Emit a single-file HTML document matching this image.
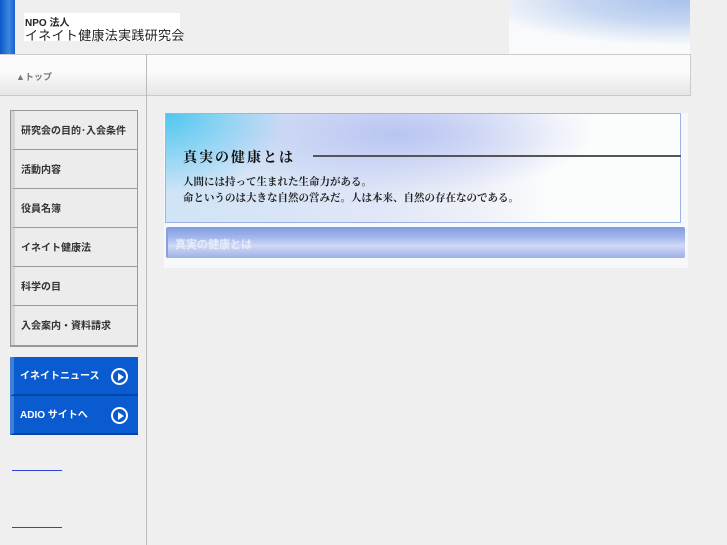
<!DOCTYPE html>
<html><head><meta charset="utf-8"><style>
*{margin:0;padding:0;box-sizing:border-box}
body{width:727px;height:545px;background:#efefef;position:relative;overflow:hidden;font-family:"Liberation Sans","Noto Sans CJK JP",sans-serif}
.a{position:absolute}
.menu div{height:39px;border-bottom:1px solid #9a9a9a;border-left:4px solid #d6d6d6;background:#ececec;font-size:10px;font-weight:bold;color:#333;padding-left:6px;line-height:42px}
.blue div{height:39px;border-left:4px solid #3f7fd6;background:#0a5bd0;color:#fff;font-size:10px;font-weight:bold;padding-left:6px;line-height:40px;border-bottom:2px solid #0046a8;position:relative}
.blue span.c{position:absolute;right:10px;top:11px;width:17px;height:17px;border:2px solid #fff;border-radius:50%}
.blue span.c:after{content:"";position:absolute;left:5px;top:3px;border-left:6px solid #fff;border-top:4px solid transparent;border-bottom:4px solid transparent}
</style></head><body>
<div class="a" style="left:0;top:0;width:15px;height:54px;background:linear-gradient(90deg,#0a58c8,#3d86e0 60%,#1a62cc)"></div>
<div class="a" style="left:24px;top:13px;width:156px;height:28px;background:#fff"></div>
<div class="a" style="left:25px;top:14px;font-size:10px;font-weight:bold;color:#222">NPO 法人</div>
<div class="a" style="left:25px;top:25px;font-size:13px;color:#222;letter-spacing:0.3px">イネイト健康法実践研究会</div>
<div class="a" style="left:509px;top:0;width:181px;height:54px;background:radial-gradient(ellipse 200px 45px at 170px 0,#a9c2ec 0%,#c7d7f2 50%,#f8fafb 100%)"></div>
<div class="a" style="left:0;top:54px;width:691px;height:42px;border-top:1px solid #ccc;border-bottom:1px solid #c8c8c8;border-right:1px solid #ccc;background:linear-gradient(#fbfbfb 40%,#e6e6e6)"></div>
<div class="a" style="left:146px;top:54px;width:1px;height:491px;background:#bbb"></div>
<div class="a" style="left:16px;top:70px;font-size:9px;color:#777;font-weight:bold">▲トップ</div>
<div class="a menu" style="left:10px;top:110px;width:128px;border:1px solid #999;border-bottom:2px solid #999">
<div>研究会の目的･入会条件</div><div>活動内容</div><div>役員名簿</div><div>イネイト健康法</div><div>科学の目</div><div style="border-bottom:0">入会案内・資料請求</div></div>
<div class="a blue" style="left:10px;top:357px;width:128px">
<div>イネイトニュース<span class="c"></span></div><div>ADIO サイトへ<span class="c"></span></div></div>
<div class="a" style="left:12px;top:470px;width:50px;height:1px;background:#3340e0"></div>
<div class="a" style="left:12px;top:527px;width:50px;height:1px;background:#3340e0"></div>
<div class="a" style="left:164px;top:113px;width:524px;height:155px;background:#f7f8f9"></div>
<div class="a" style="left:165px;top:113px;width:516px;height:110px;border:1px solid #9fb2e6;background:radial-gradient(ellipse 120px 80px at 0 0,#4fc6f0,transparent),radial-gradient(ellipse 200px 60px at 230px 20px,#b9c5f2,transparent),linear-gradient(90deg,#cfe4f6 0%,#dfe6f7 40%,#eef0f8 60%,#fbfcfc 75%)"></div>
<div class="a" style="left:183px;top:147px;font-size:14px;font-weight:bold;color:#111;font-family:'Liberation Serif','Noto Serif CJK SC',serif;letter-spacing:2px">真実の健康とは</div>
<div class="a" style="left:313px;top:155px;width:368px;height:2px;background:#555"></div>
<div class="a" style="left:183px;top:175px;font-size:10.5px;font-weight:bold;color:#222;line-height:16px;font-family:'Liberation Serif','Noto Serif CJK SC',serif">人間には持って生まれた生命力がある。<br>命というのは大きな自然の営みだ。人は本来、自然の存在なのである。</div>
<div class="a" style="left:166px;top:227px;width:519px;height:31px;border-left:2px solid #8aa0dc;background:linear-gradient(#7f9ce0,#a6b8ec 35%,#d0daf6 60%,#9eb0e6);border-radius:2px"></div>
<div class="a" style="left:175px;top:236px;font-size:11px;color:#e8ecfb;font-weight:bold">真実の健康とは</div>
</body></html>
